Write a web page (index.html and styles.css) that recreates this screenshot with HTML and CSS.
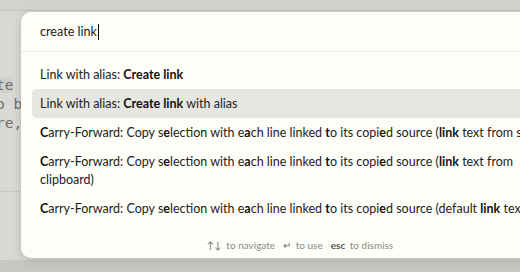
FILE: index.html
```html
<!DOCTYPE html>
<html>
<head>
    <title>Command palette</title>
    <link rel="stylesheet" href="styles.css">
</head>
<body>
    <div class="editor">
        <div class="editor-top"></div>
        <div class="editor-lines">
            <div class="code-line"><span class="code-hl">te</span></div>
            <div class="code-line">o b</div>
            <div class="code-line">re,</div>
        </div>
        <div class="editor-rule"></div>
        <div class="editor-gap"></div>
        <div class="editor-bottom">
            <span class="bottom-text">lo  Ne  fr   wor  lit  Iri  rlo  lu</span>
        </div>
    </div>

    <div class="palette">
        <div class="prompt">
            <span class="prompt-text">create link</span><span class="caret"></span>
        </div>

        <div class="suggestions">
            <div class="suggestion">Link with alias: <b>Create link</b></div>
            <div class="suggestion selected">Link with alias: <b>Create link</b> with alias</div>
            <div class="suggestion one-line"><b>C</b>arry-Forward: Copy s<b>e</b>lection with e<b>a</b>ch line linked <b>t</b>o its copi<b>e</b>d source (<b>link</b> text from selection)</div>
            <div class="suggestion"><b>C</b>arry-Forward: Copy s<b>e</b>lection with e<b>a</b>ch line linked <b>t</b>o its copi<b>e</b>d source (<b>link</b> text from clipboard)</div>
            <div class="suggestion"><b>C</b>arry-Forward: Copy s<b>e</b>lection with e<b>a</b>ch line linked <b>t</b>o its copi<b>e</b>d source (default <b>link</b> text)</div>
        </div>

        <div class="instructions">
            <span class="hint"><span class="key">↑↓</span> to navigate</span>
            <span class="hint"><span class="key">↵</span> to use</span>
            <span class="hint"><span class="key key-bold">esc</span> to dismiss</span>
        </div>
    </div>
</body>
</html>
```

FILE: styles.css
```css
body {
    margin: 0;
    width: 520px;
    height: 272px;
    overflow: hidden;
    position: relative;
    background-color: #d8d8d4;
    font-family: Lato, "Noto Sans", sans-serif;
    color: #222;
}

.editor {
    height: 272px;
    display: flex;
    flex-direction: column;
}

.editor-top {
    height: 10px;
    background-color: #d2d2ce;
    border-bottom: 1px solid #c2c2be;
}

.editor-lines {
    padding-top: 65px;
    height: 115px;
}

.code-line {
    font-family: "DejaVu Sans Mono", monospace;
    font-size: 14.5px;
    line-height: 19px;
    color: #6e6e6b;
    margin-left: -4px;
}

.code-hl {
    background-color: #cfcfcb;
}

.editor-rule {
    height: 1px;
    background-color: #c6c6c2;
}

.editor-gap {
    height: 68px;
}

.editor-bottom {
    flex: 1;
    background-color: #c7c7c3;
    overflow: hidden;
}

.bottom-text {
    display: block;
    padding: 9px 0 0 4px;
    font-size: 13px;
    color: #555;
    white-space: pre;
}

/* palette floats over the editor */
.palette {
    position: absolute;
    left: 21px;
    top: 12px;
    width: 558px;
    height: 246px;
    background-color: #fefef8;
    border-radius: 10px;
    box-shadow: 0 2px 10px rgba(0, 0, 0, 0.16);
    display: flex;
    flex-direction: column;
}

.prompt {
    height: 39px;
    flex-shrink: 0;
    display: flex;
    align-items: center;
    padding-left: 19px;
    border-bottom: 1px solid #ecece6;
    font-size: 12.6px;
}

.caret {
    display: inline-block;
    width: 1px;
    height: 16px;
    background-color: #111;
    margin-left: 1px;
}

.suggestions {
    padding: 8px 11px 0 11px;
}

.suggestion {
    padding: 5.5px 8px;
    line-height: 18px;
    font-size: 12.5px;
    border-radius: 5px;
    color: #222;
}

.one-line {
    white-space: nowrap;
}

.suggestion b {
    font-weight: bold;
    color: #111;
}

.selected {
    background-color: #e7e7e1;
}

.instructions {
    display: flex;
    justify-content: center;
    gap: 8px;
    font-size: 10px;
    line-height: 12px;
    color: #8a8a86;
    padding-top: 16px;
}

.key {
    color: #6f6f6c;
    margin-right: 2px;
}

.key-bold {
    font-weight: bold;
    color: #555;
}
```
